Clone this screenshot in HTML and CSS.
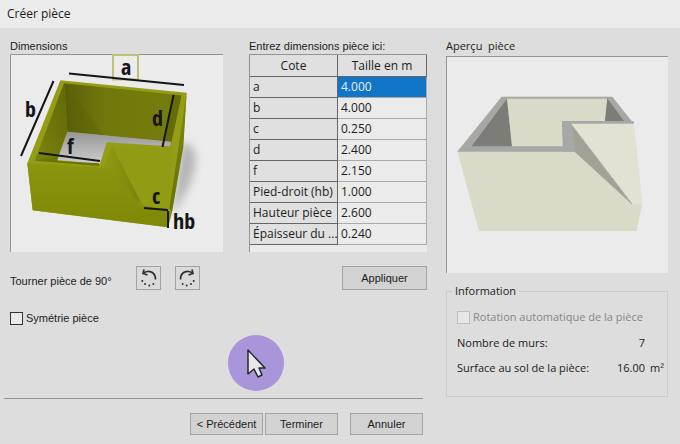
FILE: index.html
```html
<!DOCTYPE html>
<html lang="fr">
<head>
<meta charset="utf-8">
<meta name="viewport" content="width=device-width, initial-scale=1">
<title>Créer pièce</title>
<link rel="stylesheet" href="styles.css">
</head>
<body>
<header class="titlebar"><h1>Créer pièce</h1></header>
<main class="dialog">
  <section class="editor">
    <div class="columns">
      <div class="column">
        <h2 class="caption">Dimensions</h2>
        <div class="well">
          <svg class="drawing" viewBox="11 55 212 197" role="img" aria-label="Schéma des cotes">
            <defs>
              <linearGradient id="front" x1="0" y1="0" x2="0" y2="1"><stop offset="0" stop-color="#8d9a10"/><stop offset="1" stop-color="#7f8807"/></linearGradient>
              <linearGradient id="back" x1="0" y1="0" x2="1" y2="0"><stop offset="0" stop-color="#595f08"/><stop offset=".35" stop-color="#70780b"/><stop offset="1" stop-color="#747d0c"/></linearGradient>
              <linearGradient id="inner" x1="0" y1="1" x2="1" y2="0"><stop offset="0" stop-color="#7b850c"/><stop offset="1" stop-color="#606708"/></linearGradient>
              <linearGradient id="floor" x1="0" y1="0" x2="0" y2="1"><stop offset="0" stop-color="#969696"/><stop offset="1" stop-color="#cecece"/></linearGradient>
              <linearGradient id="fold" x1="0" y1="0" x2="1" y2="0"><stop offset="0" stop-color="#8f9a12"/><stop offset="1" stop-color="#7a830b"/></linearGradient>
              <linearGradient id="side" x1="0" y1="0" x2="0" y2="1"><stop offset="0" stop-color="#7e890d"/><stop offset="1" stop-color="#697207"/></linearGradient>
              <filter id="soft" x="-30%" y="-30%" width="160%" height="160%"><feGaussianBlur stdDeviation="12"/></filter>
            </defs>
            <g transform="translate(0 40) scale(.33333)">
              <path d="M545 310Q590 310 586 375Q570 450 516 525Z" fill="#b4b4b5" filter="url(#soft)"/>
              <path d="M181 121L560 158L548 325L516 515L504 562L98 511L82 370Z" fill="#939e16"/>
              <path d="M192 130L202 275L172 360L104 362Z" fill="url(#inner)"/>
              <path d="M192 130L544 166L514 306L202 275Z" fill="url(#back)"/>
              <path d="M192 130L312 285L202 275Z" fill="#535907" opacity=".2"/>
              <path d="M520 164L544 167L512 318L487 317Z" fill="#646c0a"/>
              <path d="M202 275L514 305L511 319L320 307L300 372L172 360Z" fill="url(#floor)"/>
              <path d="M104 362L172 351L172 363L298 370L297 378Z" fill="#6b7409"/>
              <path d="M82 370L310 383L337 318L418 493L516 515L504 562L98 511Z" fill="url(#front)"/>
              <path d="M337 318L428 496L405 475L330 385L312 383Z" fill="url(#fold)"/>
              <path d="M337 318L520 322L505 510L428 496Z" fill="#909c13"/>
              <path d="M560 158L550 320L516 515L508 506Z" fill="url(#side)"/>
            </g>
            <path class="frame" d="M113 55h25v24.500h-25z"/>
            <path class="measure" d="M69 73.500L184 85M53.500 81L21 156M173.500 95L162.500 147M39 153L100 161M144 208L168 210M168 211V228"/>
            <g class="mark">
              <text x="121" y="75">a</text><text x="25" y="117">b</text><text x="152" y="126">d</text>
              <text x="67" y="154">f</text><text x="152" y="204">c</text><text x="173" y="229">hb</text>
            </g>
          </svg>
        </div>
      </div>
      <div class="column">
        <h2 class="caption">Entrez dimensions pièce ici:</h2>
        <div class="well grid-well">
          <table class="sizes">
            <colgroup><col class="name-col"><col></colgroup>
            <thead><tr><th scope="col">Cote</th><th scope="col">Taille en m</th></tr></thead>
            <tbody>
              <tr><th scope="row">a</th><td class="selected">4.000</td></tr>
              <tr><th scope="row">b</th><td>4.000</td></tr>
              <tr><th scope="row">c</th><td>0.250</td></tr>
              <tr><th scope="row">d</th><td>2.400</td></tr>
              <tr><th scope="row">f</th><td>2.150</td></tr>
              <tr><th scope="row">Pied-droit (hb)</th><td>1.000</td></tr>
              <tr><th scope="row">Hauteur pièce</th><td>2.600</td></tr>
              <tr><th scope="row">Épaisseur du ...</th><td>0.240</td></tr>
            </tbody>
          </table>
        </div>
      </div>
    </div>
    <div class="actions">
      <span class="turn-label">Tourner pièce de 90°</span>
      <button class="button icon-button" type="button" aria-label="Tourner à gauche">
        <svg class="icon" viewBox="0 0 19 19"><path class="arc" d="M4.500 4C10 .5 16.500 3 16.500 10.500"/><path class="arc" d="M5 .5L4 4.500L8.500 6"/><path class="dots" d="M3.300 12h.01M6 15h.01M10.300 16.500h.01M14.300 15h.01"/></svg>
      </button>
      <button class="button icon-button" type="button" aria-label="Tourner à droite">
        <svg class="icon" viewBox="0 0 19 19"><path class="arc" d="M14.500 4C9 .5 2.500 3 2.500 10.500"/><path class="arc" d="M14 .5L15 4.500L10.500 6"/><path class="dots" d="M15.700 12h.01M13 15h.01M8.700 16.500h.01M4.700 15h.01"/></svg>
      </button>
      <button class="button apply" type="button">Appliquer</button>
    </div>
    <label class="check"><input type="checkbox"><span>Symétrie pièce</span></label>
    <footer class="footer">
      <button class="button" type="button">&lt; Précédent</button>
      <button class="button" type="button">Terminer</button>
      <button class="button cancel" type="button">Annuler</button>
    </footer>
  </section>
  <section class="preview">
    <h2 class="caption">Aperçu&nbsp; pièce</h2>
    <div class="well">
      <svg class="drawing" viewBox="447 57 221 216" role="img" aria-label="Aperçu de la pièce">
        <g transform="translate(440 35) scale(.33333)">
          <path d="M52 349L185 185H517L581 266L607 508L589 588H117Z" fill="#d9dac8"/>
          <path d="M185 185H517L581 266H392L405 350H52Z" fill="#a6a8a6"/>
          <path d="M201 191L216 334H95Z" fill="#7b7d76"/>
          <path d="M201 191H502L495 258H366L369 334H216Z" fill="#d9dac8"/>
          <path d="M502 190L552 258H495Z" fill="#7b7d76"/>
          <path d="M366 258H581V266H392L405 350H369Z" fill="#a6a8a8"/>
          <path d="M392 266L576 507L405 350Z" fill="#a1a194"/>
          <path d="M392 266H581L607 508H576Z" fill="#e1e2d1"/>
          <path d="M392 266L576 507L405 350" fill="none" stroke="#a5a7ac" stroke-width="3"/>
        </g>
      </svg>
    </div>
    <fieldset class="info">
      <legend>Information</legend>
      <label class="check disabled"><input type="checkbox" disabled><span>Rotation automatique de la pièce</span></label>
      <dl class="facts">
        <dt>Nombre de murs:</dt><dd>7</dd><dd class="unit"></dd>
        <dt>Surface au sol de la pièce:</dt><dd>16.00</dd><dd class="unit">m²</dd>
      </dl>
    </fieldset>
  </section>
</main>
<svg class="pointer" viewBox="0 0 56 56" aria-hidden="true">
  <circle cx="28" cy="28" r="28" fill="#a995d9"/>
  <path d="M20 15V39L26 34L30 42L34 40L31 33H37Z" fill="#e9e7e9" stroke="#242a2d" stroke-width="1.500" stroke-linejoin="round"/>
</svg>
</body>
</html>
```
FILE: styles.css
```css
* { box-sizing: border-box; }

body {
  margin: 0;
  min-height: 100vh;
  background: #dcdddc;
  color: #1c1c1c;
  font: 11px/16px "Liberation Sans", Arial, sans-serif;
}

h1, h2, dl, dd { margin: 0; font-weight: 400; }

.titlebar { background: #eaebea; padding: 4px 7px; }
.titlebar h1 { font: 12px/20px "Open Sans", sans-serif; }

.dialog {
  display: grid;
  grid-template-columns: 417fr 222fr;
  gap: 19px;
  padding: 10px 12px 0 10px;
}

.columns {
  display: grid;
  grid-template-columns: 213fr 178fr;
  gap: 26px;
}
.column { display: flex; flex-direction: column; min-width: 0; }
.caption { font-size: 11px; line-height: 16px; white-space: nowrap; }

.well {
  background: #eaebea;
  border: solid #929392;
  border-width: 1px 0 0 1px;
}
.drawing { display: block; width: 100%; height: auto; overflow: visible; }
.grid-well { flex: 1; }

.frame { fill: none; stroke: #bfc077; stroke-width: 2; }
.measure { fill: none; stroke: #151515; stroke-width: 2; }
.mark { fill: #151515; font: 700 22px "Open Sans Condensed", "DejaVu Sans Condensed", sans-serif; }

.sizes {
  width: 100%;
  table-layout: fixed;
  border-collapse: separate;
  border-spacing: 0;
  font: 12px/20px "Open Sans", sans-serif;
}
.name-col { width: 88px; }
.sizes th, .sizes td {
  height: 21px;
  padding: 0 3px;
  border: solid #666;
  border-width: 0 1px 1px 0;
  background: #dfe0df;
  font-weight: 400;
  text-align: left;
  white-space: nowrap;
}
.sizes thead th { height: 22px; line-height: 21px; text-align: center; }
.sizes td { background: #eaebea; border-color: #aaa; }
.sizes .selected { background: #1175c7; color: #e8f0f8; }

.button {
  height: 22px;
  width: 73px;
  padding: 0;
  border: 1px solid #a2a3a2;
  border-radius: 0;
  background: #d2d2d2;
  color: inherit;
  font: inherit;
}

.actions { display: flex; align-items: center; margin-top: 14px; }
.turn-label { flex: 0 0 126px; padding-top: 6px; white-space: nowrap; }
.icon-button { width: 25px; height: 24px; margin-right: 14px; background: #d9dad9; }
.icon { display: block; width: 19px; height: 19px; margin: auto; }
.arc { fill: none; stroke: #333; stroke-width: 1.7; }
.dots { fill: none; stroke: #333; stroke-width: 2; stroke-linecap: round; }
.apply { width: 85px; height: 24px; margin-left: auto; }

.check { display: flex; align-items: center; gap: 3px; width: max-content; }
.check input {
  appearance: none;
  width: 13px;
  height: 13px;
  margin: 0;
  border: 1px solid #333;
  background: #e9eae9;
}
.editor > .check { margin-top: 20px; }
.check.disabled { color: #868786; }
.check.disabled input { border-color: #bebfbe; background: #e6e7e6; }

.footer {
  display: flex;
  justify-content: flex-end;
  gap: 2px;
  margin: 72px 4px 0 -6px;
  padding-top: 14px;
  border-top: 1px solid #929392;
}
.cancel { margin-left: 10px; }

.preview .caption { margin-bottom: 2px; font: 11px/16px "Open Sans", sans-serif; }
.info {
  margin: 10px 0 0;
  padding: 10px 4px 20px 10px;
  border: 1px solid #cbcccb;
  font: 11px/16px "Open Sans", sans-serif;
}
.info legend { margin-left: -5px; padding: 0 3px; }
.facts {
  display: grid;
  grid-template-columns: 1fr auto 13px;
  row-gap: 9px;
  column-gap: 5px;
  margin-top: 10px;
  white-space: nowrap;
}
.facts dd { text-align: right; }

.pointer {
  position: absolute;
  left: 228px;
  top: 335px;
  width: 56px;
  height: 56px;
  pointer-events: none;
}
```
